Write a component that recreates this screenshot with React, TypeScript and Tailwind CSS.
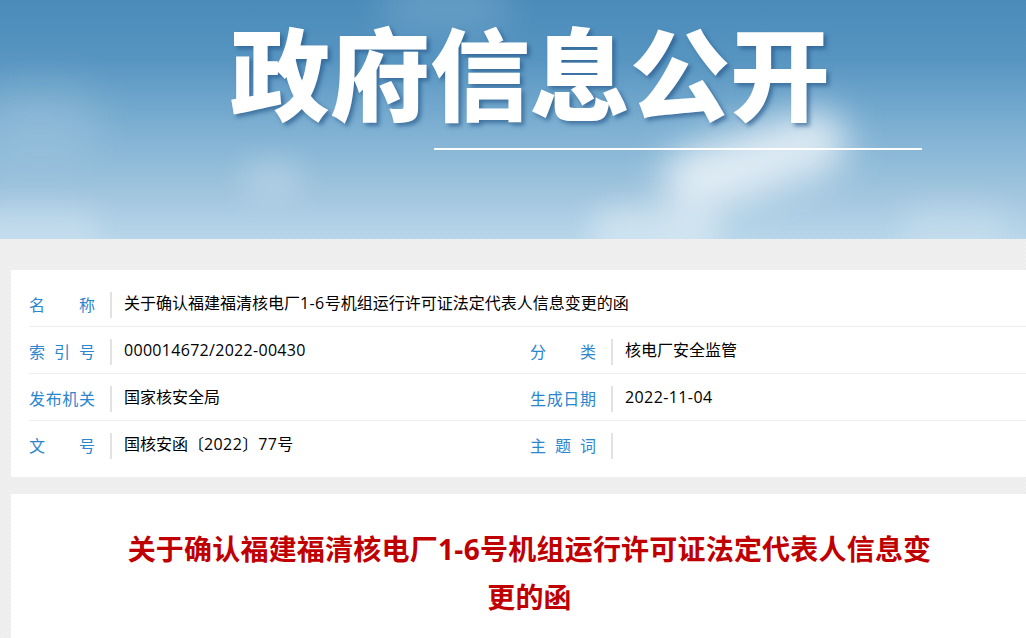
import React from 'react';

const font = "[font-family:'Open_Sans','Noto_Sans_CJK_SC','Liberation_Sans',sans-serif]";

const Num: React.FC<{ children: React.ReactNode }> = ({ children }) => (
  <span className="tracking-[0.4px]">{children}</span>
);

const Cell: React.FC<{ label: string; value?: React.ReactNode; className?: string }> = ({ label, value, className }) => (
  <div className={`flex h-[26px] items-center ${className || ''}`}>
    <span className="w-[66px] shrink-0 text-[16px] leading-[24px] text-[#2b86cf] [text-align:justify] [text-align-last:justify]">
      {label}
    </span>
    <span className="ml-[15px] h-[26px] w-[2px] shrink-0 bg-[#e2e2e2]" />
    <span className="relative top-[-2px] ml-[12px] text-[16px] leading-[24px] text-black whitespace-nowrap">{value}</span>
  </div>
);

const rowClass = 'flex h-[47px] items-start pt-[12px] border-b border-[#eeeeee]';

const App: React.FC = () => {
  return (
    <div className={`w-[1026px] h-[638px] overflow-hidden bg-[#eeeeee] bg-[repeating-conic-gradient(#f0f0f0_0_25%,#ededed_0_50%)] bg-[length:4px_4px] ${font}`}>
      <header className="relative h-[239px] bg-[linear-gradient(180deg,#4a8bba_0%,#5795c1_25%,#7fb1d3_55%,#a2c6df_82%,#b8d6ea_100%)]">
        {/* clouds */}
        <div className="absolute inset-0 overflow-hidden">
          <div className="absolute left-[-20px] top-[85px] h-[70px] w-[120px] rounded-full bg-white/15 blur-[22px]" />
          <div className="absolute left-[240px] top-[158px] h-[40px] w-[64px] rounded-full bg-white/20 blur-[14px]" />
          <div className="absolute left-[380px] top-[-20px] h-[50px] w-[130px] rounded-full bg-white/15 blur-[18px]" />
          <div className="absolute left-[660px] top-[128px] h-[66px] w-[190px] rotate-[-18deg] rounded-full bg-white/70 blur-[18px]" />
          <div className="absolute left-[590px] top-[205px] h-[50px] w-[130px] rounded-full bg-white/35 blur-[14px]" />
          <div className="absolute left-[900px] top-[205px] h-[45px] w-[110px] rounded-full bg-white/20 blur-[16px]" />
          <div className="absolute left-[-30px] top-[205px] h-[50px] w-[130px] rounded-full bg-white/20 blur-[14px]" />
        </div>
        <div className="relative flex flex-col">
          <h1 className="ml-[230px] whitespace-nowrap text-[100px] leading-[139px] font-black text-white [font-family:'Noto_Sans_CJK_SC',sans-serif] [text-shadow:3px_3px_4px_rgba(35,85,135,0.65)]">
            政府信息公开
          </h1>
          <div className="ml-[434px] mt-[9px] h-[2px] w-[488px] bg-white" />
        </div>
      </header>

      <section className="ml-[11px] mt-[31px] h-[207px] w-[1040px] bg-white pt-[10px] pl-[18px]">
        <div className={rowClass}>
          <Cell label="名 称" value={<>关于确认福建福清核电厂<Num>1-6</Num>号机组运行许可证法定代表人信息变更的函</>} />
        </div>
        <div className={rowClass}>
          <Cell className="w-[501px]" label="索 引 号" value={<span className="tracking-[0.3px]">000014672/2022-00430</span>} />
          <Cell label="分 类" value="核电厂安全监管" />
        </div>
        <div className={rowClass}>
          <Cell className="w-[501px]" label="发布机关" value="国家核安全局" />
          <Cell label="生成日期" value={<Num>2022-11-04</Num>} />
        </div>
        <div className="flex h-[47px] items-start pt-[12px]">
          <Cell className="w-[501px]" label="文 号" value={<>国核安函〔<Num>2022</Num>〕<Num>77</Num>号</>} />
          <Cell label="主 题 词" />
        </div>
      </section>

      <section className="ml-[11px] mt-[17px] h-[300px] w-[1040px] bg-white pt-[31px] pr-[3px]">
        <h2 className="mx-auto w-[815px] text-center text-[28px] leading-[48px] font-bold tracking-[0.2px] text-[#c00000]">
          关于确认福建福清核电厂<Num>1-6</Num>号机组运行许可证法定代表人信息变更的函
        </h2>
      </section>
    </div>
  );
};

export default App;
